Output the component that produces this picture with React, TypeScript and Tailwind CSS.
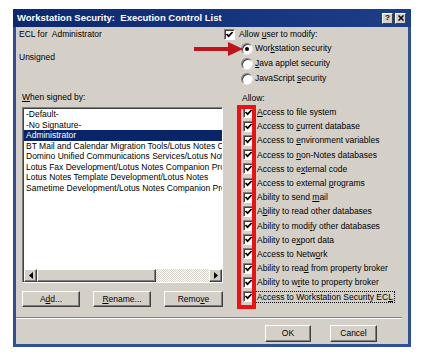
import type { ReactNode } from 'react'

const FONT = "font-['Liberation_Sans',Arial,sans-serif]"

const PERMISSIONS: ReactNode[] = [
  <><u>A</u>ccess to file system</>,
  <>Access to <u>c</u>urrent database</>,
  <>Access to <u>e</u>nvironment variables</>,
  <>Access to <u>n</u>on-Notes databases</>,
  <>Access to e<u>x</u>ternal code</>,
  <>Access to external <u>p</u>rograms</>,
  <>Ability to send <u>m</u>ail</>,
  <>A<u>b</u>ility to read other databases</>,
  <>Ability to modi<u>f</u>y other databases</>,
  <>Ability to e<u>x</u>port data</>,
  <>Access to Netw<u>o</u>rk</>,
  <>Ability to rea<u>d</u> from property broker</>,
  <>Ability to w<u>r</u>ite to property broker</>,
  <>Access to Workstation Security EC<u>L</u></>,
]

const SIGNERS = [
  '-Default-',
  '-No Signature-',
  'Administrator',
  'BT Mail and Calendar Migration Tools/Lotus Notes Companion Products',
  'Domino Unified Communications Services/Lotus Notes Companion Products',
  'Lotus Fax Development/Lotus Notes Companion Products',
  'Lotus Notes Template Development/Lotus Notes',
  'Sametime Development/Lotus Notes Companion Products',
]

function CheckBox() {
  return (
    <span className="w-[11px] h-[11px] shrink-0 bg-white border border-t-[#808080] border-l-[#808080] border-r-white border-b-white shadow-[inset_1px_1px_0_#404040] flex items-center justify-center">
      <svg width="9" height="9" viewBox="0 0 9 9">
        <path d="M1.5 4 L3.6 6.2 L7.6 2" fill="none" stroke="#000" strokeWidth="1.7" />
      </svg>
    </span>
  )
}

function Radio({ on }: { on?: boolean }) {
  return (
    <span className="w-[12px] h-[12px] shrink-0 rounded-full bg-white border border-t-[#808080] border-l-[#808080] border-r-[#e8e8e8] border-b-[#e8e8e8] shadow-[inset_1px_1px_0_#404040] flex items-center justify-center">
      {on && <span className="w-[4px] h-[4px] rounded-full bg-black" />}
    </span>
  )
}

function Button({ children, className }: { children: ReactNode; className: string }) {
  return (
    <div
      className={`bg-[#d4d0c8] border border-t-white border-l-white border-r-[#404040] border-b-[#404040] shadow-[inset_-1px_-1px_0_#808080] flex items-center justify-center text-[8.5px] text-black ${className}`}
    >
      {children}
    </div>
  )
}

function ScrollArrow({ dir }: { dir: 'left' | 'right' }) {
  return (
    <div className="w-[13px] h-[13px] shrink-0 bg-[#d4d0c8] border border-t-white border-l-white border-r-[#404040] border-b-[#404040] shadow-[inset_-1px_-1px_0_#808080] flex items-center justify-center">
      <svg width="4" height="7" viewBox="0 0 4 7">
        <path d={dir === 'left' ? 'M4 0 L0 3.5 L4 7 Z' : 'M0 0 L4 3.5 L0 7 Z'} fill="#000" />
      </svg>
    </div>
  )
}

export default function App() {
  return (
    <div className={`w-[424px] h-[362px] bg-white relative pt-[9px] pl-[13px] ${FONT}`}>
      <div className="w-[398px] h-[338px] bg-[#2f4f98] flex flex-col">
        {/* Title bar */}
        <div className="h-[18px] shrink-0 flex items-center pl-[4px] pr-[5px] bg-gradient-to-r from-[#0b2870] to-[#1d3f88]">
          <span className="text-white font-bold text-[9.5px] whitespace-pre leading-none">
            Workstation Security:  Execution Control List
          </span>
          <div className="ml-auto flex gap-[2px]">
            <div className="w-[11px] h-[11px] bg-[#d4d0c8] border border-t-white border-l-white border-r-[#404040] border-b-[#404040] flex items-center justify-center text-[8px] font-bold leading-none text-black">
              ?
            </div>
            <div className="w-[11px] h-[11px] bg-[#d4d0c8] border border-t-white border-l-white border-r-[#404040] border-b-[#404040] flex items-center justify-center">
              <svg width="6" height="6" viewBox="0 0 6 6">
                <path d="M0.5 0.5 L5.5 5.5 M5.5 0.5 L0.5 5.5" stroke="#000" strokeWidth="1.5" />
              </svg>
            </div>
          </div>
        </div>

        {/* Body */}
        <div className="mx-[3px] mb-[3px] flex-1 bg-[#d4d0c8] flex flex-col text-[8.5px] text-black">
          <div className="flex">
            {/* Left column */}
            <div className="w-[208px] shrink-0 flex flex-col">
              <div className="h-[14px] ml-[3px] flex items-center whitespace-pre">ECL for  Administrator</div>
              <div className="h-[14px] ml-[3px] mt-[9px] flex items-center">Unsigned</div>
              <div className="h-[12px] ml-[6px] mt-[27px] flex items-center">
                <span><u>W</u>hen signed by:</span>
              </div>
              <div className="ml-[6px] mt-[4px] w-[201px] h-[176px] bg-white border border-t-[#808080] border-l-[#808080] border-r-white border-b-white shadow-[inset_1px_1px_0_#404040] flex flex-col pt-[1px] pl-[1px]">
                <div className="flex-1 overflow-hidden">
                  {SIGNERS.map((s) => (
                    <div
                      key={s}
                      className={`h-[10.5px] leading-[10.5px] pl-[2px] whitespace-nowrap ${
                        s === 'Administrator' ? 'bg-[#0a246a] text-white' : ''
                      }`}
                    >
                      {s}
                    </div>
                  ))}
                </div>
                <div className="h-[13px] flex">
                  <ScrollArrow dir="left" />
                  <div className="w-[119px] h-[13px] bg-[#d4d0c8] border border-t-white border-l-white border-r-[#404040] border-b-[#404040] shadow-[inset_-1px_-1px_0_#808080]" />
                  <div className="flex-1 h-[13px] bg-[repeating-conic-gradient(#d4d0c8_0_25%,#ffffff_0_50%)] bg-size-[2px_2px]" />
                  <ScrollArrow dir="right" />
                </div>
              </div>
              <div className="ml-[6px] mt-[8px] w-[201px] flex justify-between">
                <Button className="w-[58px] h-[16px]">
                  <span>A<u>d</u>d...</span>
                </Button>
                <Button className="w-[58px] h-[16px]">
                  <span><u>R</u>ename...</span>
                </Button>
                <Button className="w-[59px] h-[16px]">
                  <span>Remo<u>v</u>e</span>
                </Button>
              </div>
            </div>

            {/* Right column */}
            <div className="flex flex-col">
              <div className="h-[14px] flex items-center gap-[4px]">
                <CheckBox />
                <span>Allow <u>u</u>ser to modify:</span>
              </div>
              <div className="h-[15px] ml-[17px] flex items-center gap-[2px]">
                <Radio on />
                <span>Wor<u>k</u>station security</span>
              </div>
              <div className="h-[15px] ml-[17px] flex items-center gap-[2px]">
                <Radio />
                <span><u>J</u>ava applet security</span>
              </div>
              <div className="h-[15px] ml-[17px] flex items-center gap-[2px]">
                <Radio />
                <span>JavaScript <u>s</u>ecurity</span>
              </div>
              <div className="h-[12px] mt-[6px] ml-[18px] flex items-center">Allow:</div>
              <div className="mt-[1px] flex flex-col">
                {PERMISSIONS.map((p, i) => (
                  <div key={i} className="h-[14.2px] ml-[19px] flex items-center gap-[3px]">
                    <CheckBox />
                    <span
                      className={`whitespace-nowrap leading-[10px] ${
                        i === PERMISSIONS.length - 1 ? 'border border-dotted border-black px-[1px] -ml-[2px]' : ''
                      }`}
                    >
                      {p}
                    </span>
                  </div>
                ))}
              </div>
            </div>
          </div>

          {/* Separator */}
          <div className="mt-[10px] mr-[6px] h-[2px] border-t border-t-[#808080] border-b border-b-white" />

          {/* Bottom buttons */}
          <div className="mt-[6px] flex justify-end gap-[19px] pr-[31px]">
            <Button className="w-[46px] h-[17px]">OK</Button>
            <Button className="w-[47px] h-[17px]">Cancel</Button>
          </div>
        </div>
      </div>

      {/* Annotation: red arrow */}
      <svg className="absolute left-[194px] top-[42px]" width="52" height="14" viewBox="0 0 52 14">
        <rect x="0" y="5" width="36" height="4" fill="#c0141c" />
        <path d="M34 0 L49 7 L34 14 Z" fill="#c0141c" />
      </svg>

      {/* Annotation: red box */}
      <div className="absolute left-[237px] top-[105px] w-[19px] h-[204px] border-[4px] border-[#ee1111]" />
    </div>
  )
}
